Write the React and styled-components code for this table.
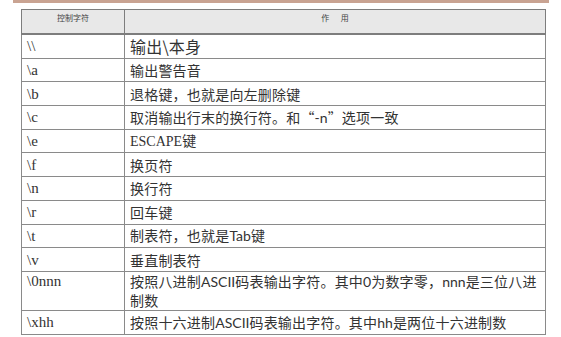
import React from "react";
import styled, { createGlobalStyle } from "styled-components";

const GlobalStyle = createGlobalStyle`
  html, body {
    margin: 0;
    padding: 0;
    background: #ffffff;
  }
`;

const Page = styled.div`
  width: 561px;
  height: 337px;
  overflow: hidden;
  background: #fff;
`;

const TopRule = styled.div`
  margin: 0 12px 0 13px;
  height: 3px;
  background: #c9a392;
`;

const Sheet = styled.div`
  padding: 6px 0 0 21px;
`;

const Table = styled.table`
  width: 525px;
  border-collapse: collapse;
  table-layout: fixed;
  color: #2e2e2e;
  font-family: "Liberation Serif", "Noto Sans CJK SC", serif;
`;

const HeadCell = styled.th`
  height: 20px;
  padding: 3px 0 0;
  background: #e8e8e8;
  border: 1px solid #7d7d7d;
  border-bottom: 2px solid #7d7d7d;
  font-family: "Noto Sans CJK SC", sans-serif;
  font-weight: 400;
  font-size: 8px;
  line-height: 10px;
  vertical-align: top;
  text-align: center;
  color: #444;
  white-space: pre;
`;

const Cell = styled.td`
  height: ${(p) => p.$h}px;
  padding: 0 5px;
  border: 1px solid #8a8a8a;
  font-size: ${(p) => (p.$big ? 16 : p.$code ? 15 : 14)}px;
  line-height: ${(p) => (p.$tall ? 19 : 16)}px;
  vertical-align: ${(p) => (p.$tall ? "top" : "middle")};
  overflow: hidden;
  font-family: ${(p) =>
    p.$code
      ? `"Liberation Serif", serif`
      : `"Noto Sans CJK SC", sans-serif`};
  color: #333;
  letter-spacing: ${(p) => (p.$code ? 0 : 0.2)}px;
`;

const Latin = styled.span`
  font-family: ${(p) => (p.$serif ? `"Liberation Serif", serif` : `"Lato", "Open Sans", sans-serif`)};
  letter-spacing: 0;
`;

const rows = [
  { code: "\\\\", text: "输出\\本身", big: true },
  { code: "\\a", text: "输出警告音" },
  { code: "\\b", text: "退格键，也就是向左删除键" },
  { code: "\\c", text: <>取消输出行末的换行符。和“<Latin>-n</Latin>”选项一致</> },
  { code: "\\e", text: <><Latin $serif>ESCAPE</Latin>键</> },
  { code: "\\f", text: "换页符" },
  { code: "\\n", text: "换行符" },
  { code: "\\r", text: "回车键" },
  { code: "\\t", text: <>制表符，也就是<Latin>Tab</Latin>键</> },
  { code: "\\v", text: "垂直制表符" },
  {
    code: "\\0nnn",
    text: (
      <>
        按照八进制<Latin>ASCII</Latin>码表输出字符。其中<Latin>0</Latin>为数字零，<Latin>nnn</Latin>是三位八进
        <br />
        制数
      </>
    ),
    h: 37,
    tall: true,
  },
  {
    code: "\\xhh",
    text: <>按照十六进制<Latin>ASCII</Latin>码表输出字符。其中<Latin>hh</Latin>是两位十六进制数</>,
  },
];

export default function App() {
  return (
    <Page>
      <GlobalStyle />
      <TopRule />
      <Sheet>
        <Table>
          <colgroup>
            <col style={{ width: "103px" }} />
            <col />
          </colgroup>
          <thead>
            <tr>
              <HeadCell>控制字符</HeadCell>
              <HeadCell>{"作　  用"}</HeadCell>
            </tr>
          </thead>
          <tbody>
            {rows.map((r, i) => (
              <tr key={i}>
                <Cell $code $h={r.h || 22.7} $tall={r.tall}>{r.code}</Cell>
                <Cell $h={r.h || 22.7} $big={r.big} $tall={r.tall}>{r.text}</Cell>
              </tr>
            ))}
          </tbody>
        </Table>
      </Sheet>
    </Page>
  );
}
